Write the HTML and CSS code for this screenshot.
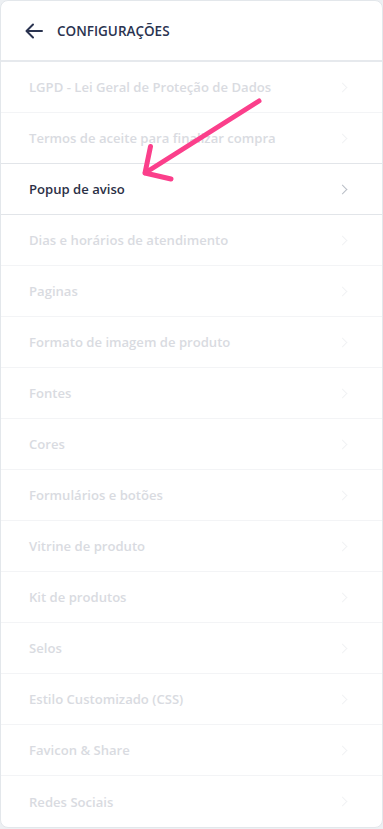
FILE: index.html
```html
<!DOCTYPE html>
<html lang="pt-BR">
<head>
<meta charset="utf-8">
<title>Configurações</title>
<link rel="stylesheet" href="styles.css">
</head>
<body>
<div class="panel">
  <header class="header">
    <svg class="back" width="18" height="16" viewBox="0 0 18 16"><path d="M17 8H2M8 1.5L1.5 8L8 14.5" fill="none" stroke="#2a3350" stroke-width="2" stroke-linecap="round" stroke-linejoin="round"/></svg>
    <h1 class="title">Configurações</h1>
  </header>
  <ul class="list">
    <li class="row faded"><span>LGPD - Lei Geral de Proteção de Dados</span><i class="chev"></i></li>
    <li class="row faded"><span>Termos de aceite para finalizar compra</span><i class="chev"></i></li>
    <li class="row active"><span>Popup de aviso</span><i class="chev"></i></li>
    <li class="row faded"><span>Dias e horários de atendimento</span><i class="chev"></i></li>
    <li class="row faded"><span>Paginas</span><i class="chev"></i></li>
    <li class="row faded"><span>Formato de imagem de produto</span><i class="chev"></i></li>
    <li class="row faded"><span>Fontes</span><i class="chev"></i></li>
    <li class="row faded"><span>Cores</span><i class="chev"></i></li>
    <li class="row faded"><span>Formulários e botões</span><i class="chev"></i></li>
    <li class="row faded"><span>Vitrine de produto</span><i class="chev"></i></li>
    <li class="row faded"><span>Kit de produtos</span><i class="chev"></i></li>
    <li class="row faded"><span>Selos</span><i class="chev"></i></li>
    <li class="row faded"><span>Estilo Customizado (CSS)</span><i class="chev"></i></li>
    <li class="row faded"><span>Favicon &amp; Share</span><i class="chev"></i></li>
    <li class="row faded last"><span>Redes Sociais</span><i class="chev"></i></li>
  </ul>
  <svg class="pointer" width="383" height="200" viewBox="0 0 383 200"><path d="M258 100L144 172M144 172L149.5 145.5M144 172L170 178" fill="none" stroke="#fb3f8b" stroke-width="5" stroke-linecap="round" stroke-linejoin="round"/></svg>
</div>
</body>
</html>
```
FILE: styles.css
```css
* { box-sizing: border-box; }
html, body { margin: 0; padding: 0; }
body {
  background: #edf0f3;
  font-family: "Open Sans", "Noto Sans", sans-serif;
  width: 383px;
  height: 829px;
  overflow: hidden;
}
.panel {
  position: relative;
  width: 383px;
  background: #fff;
  border: 1px solid #e3e7eb;
  border-radius: 8px;
  overflow: hidden;
}
.header {
  height: 61px;
  display: flex;
  align-items: center;
  padding-left: 24px;
  gap: 14px;
  border-bottom: 2px solid #e6e9ed;
}
.back { display: block; }
.title {
  margin: 0;
  font-size: 13.5px;
  font-weight: 600;
  text-transform: uppercase;
  color: #2a3350;
  letter-spacing: 0;
}
.list { list-style: none; margin: 0; padding: 0; }
.row {
  height: 51px;
  display: flex;
  align-items: center;
  justify-content: space-between;
  padding: 0 36px 0 28px;
  font-size: 13.1px;
  font-weight: 600;
  border-bottom: 1px solid #f3f4f6;
}
.row.last { border-bottom: none; }
.faded { color: #d9dbe1; }
.active { color: #2b3046; border-bottom-color: #e2e5e9; }
.row:nth-child(2) { border-bottom-color: #e2e5e9; }
.chev {
  width: 7px;
  height: 7px;
  border-right: 1.5px solid #f1f2f4;
  border-top: 1.5px solid #f1f2f4;
  transform: rotate(45deg);
}
.active .chev { border-color: #b9bec6; }
.pointer { position: absolute; left: 0; top: 0; pointer-events: none; }
```
